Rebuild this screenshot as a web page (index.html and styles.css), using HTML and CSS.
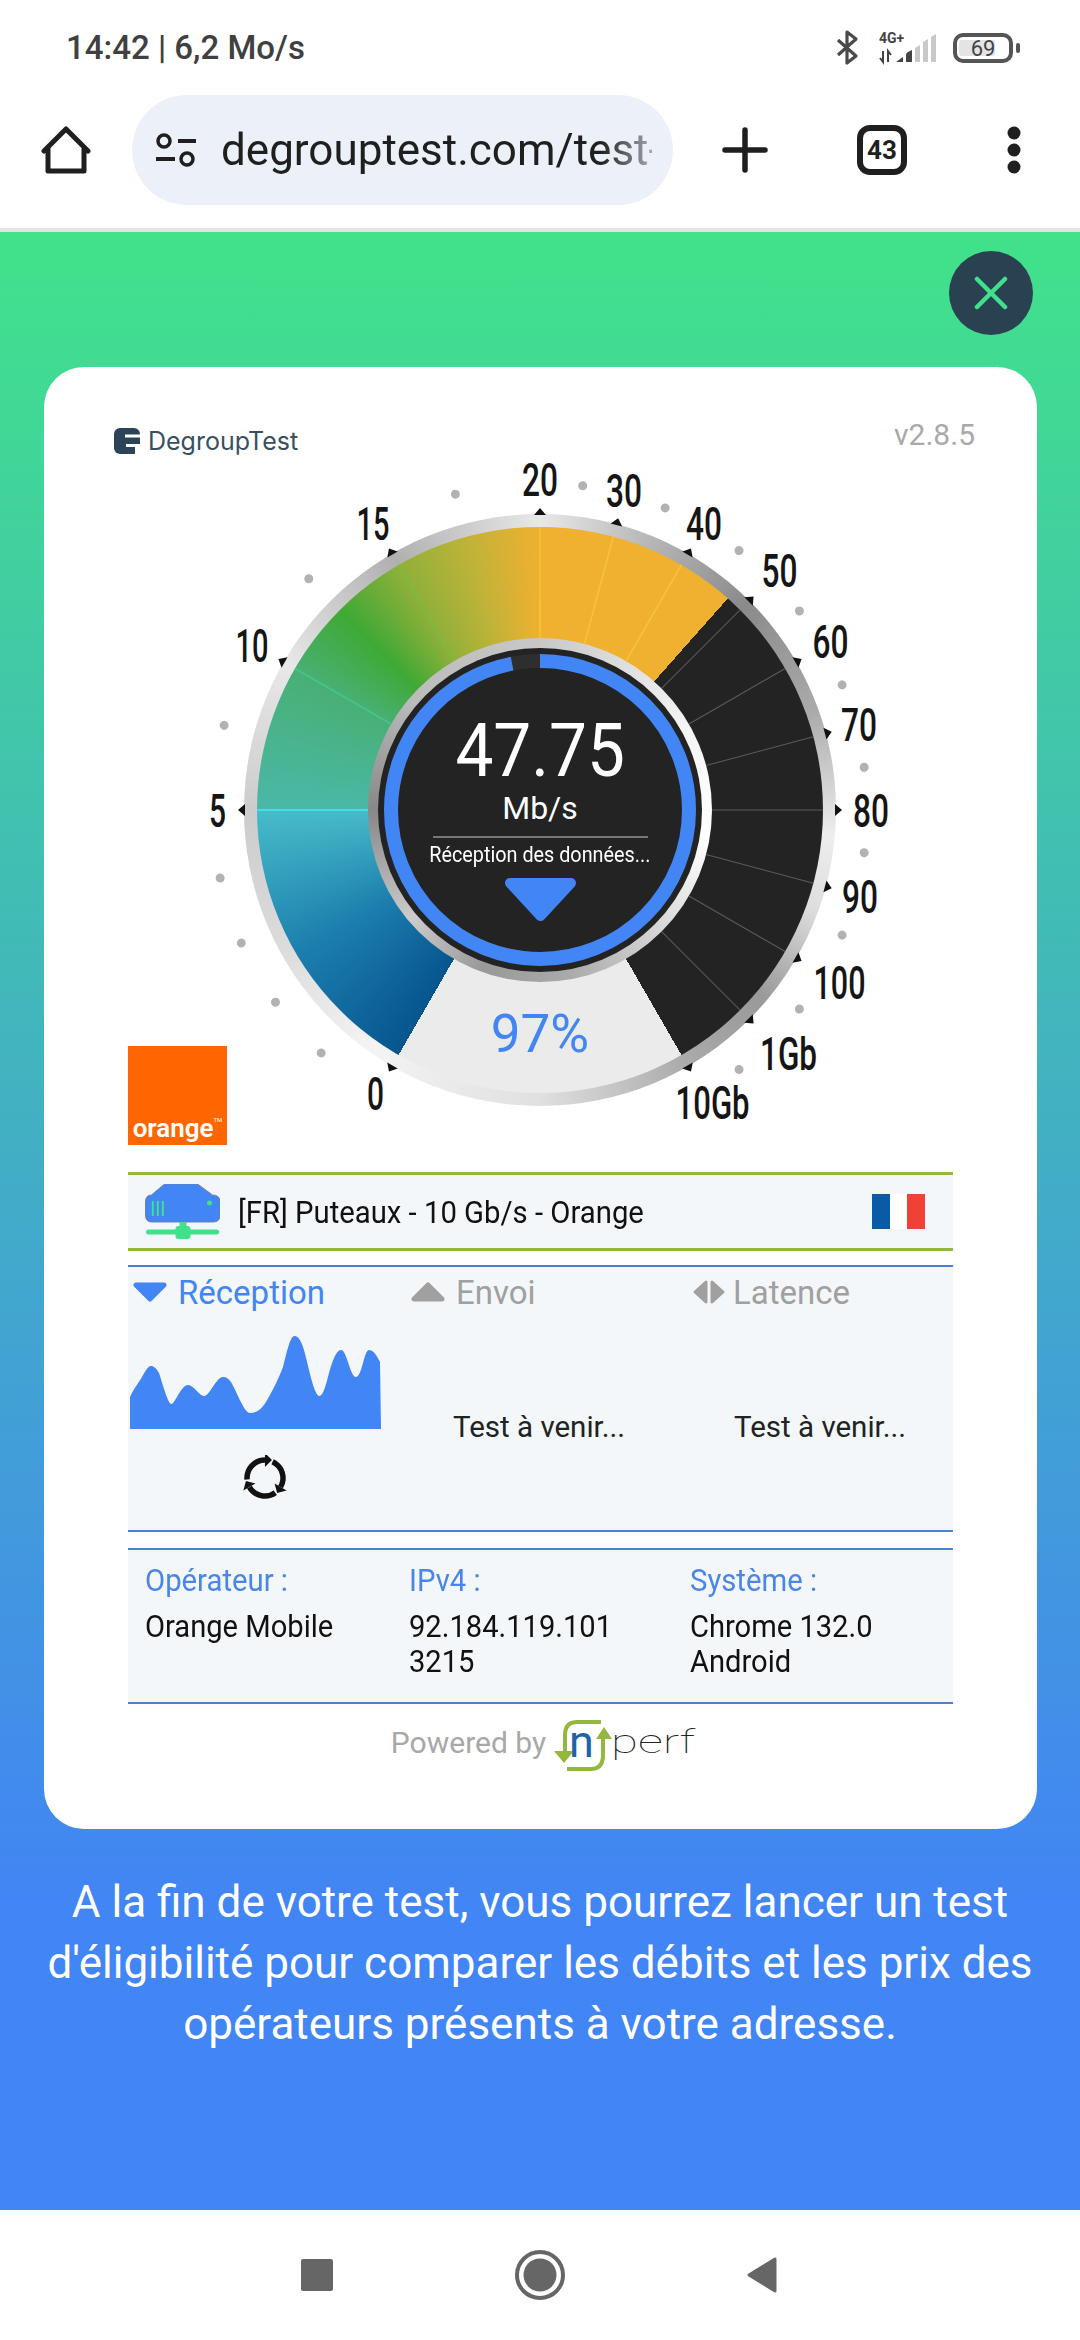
FILE: index.html
```html
<!DOCTYPE html>
<html lang="fr">
<head>
    <meta charset="UTF-8">
    <meta name="viewport" content="width=device-width, initial-scale=1.0">
    <title>DegroupTest</title>
    <link rel="stylesheet" href="styles.css">
</head>
<body>
    <!-- Phone status bar -->
    <div class="status-bar">
        <span class="status-text">14:42 | 6,2 Mo/s</span>
        <svg class="status-icons" width="194" height="50" viewBox="830 20 194 50">
            <path d="M838 38 L856 54 L847 61 V30 L856 37 L838 53" fill="none" stroke="#4a4a4a" stroke-width="3.2" stroke-linejoin="round"/>
            <text x="879" y="41" class="net-type">4G+</text>
            <path d="M883 49 V60 L880 56 M888 60 V49 L891 53" fill="none" stroke="#444" stroke-width="2"/>
            <path d="M896 60 L903 55 V60 Z M906 60 V53 Q906 51 908 50 L912 48 V60 Z" fill="#444"/>
            <path d="M915 60 V46 L920 43 V60 Z M923 60 V40 L928 37 V60 Z M931 60 V35 L936 32 V60 Z" fill="#c8c8c8"/>
            <rect x="955" y="33" width="56" height="26" rx="8" fill="none" stroke="#555" stroke-width="4"/>
            <rect x="959" y="38" width="36" height="16" rx="2" fill="#e4e4e4"/>
            <text x="983" y="54" class="battery-level">69</text>
            <rect x="1016" y="41" width="4" height="10" rx="2" fill="#555"/>
        </svg>
    </div>

    <!-- Chrome toolbar -->
    <div class="toolbar">
        <svg width="51" height="50" viewBox="41 125 51 50">
            <path d="M44 151 L66 129 L88 151 M48 148 V171 H84 V148" fill="none" stroke="#1f1f1f" stroke-width="5" stroke-linecap="round" stroke-linejoin="round"/>
        </svg>
        <div class="omnibox">
            <svg width="42" height="36" viewBox="155 132 42 36">
                <circle cx="164" cy="141" r="6" fill="none" stroke="#1f1f1f" stroke-width="3.5"/>
                <path d="M178 141 H196 M156 159 H175" stroke="#1f1f1f" stroke-width="4"/>
                <circle cx="187" cy="159" r="6" fill="none" stroke="#1f1f1f" stroke-width="3.5"/>
            </svg>
            <span class="url">degrouptest.com/test-</span>
        </div>
        <svg class="plus-icon" width="46" height="46" viewBox="722 127 46 46">
            <path d="M725 150 H765 M745 130 V170" stroke="#1f1f1f" stroke-width="5.5" stroke-linecap="round"/>
        </svg>
        <div class="tab-count">43</div>
        <svg class="menu-icon" width="14" height="48" viewBox="1007 126 14 48">
            <circle cx="1014" cy="133" r="6.5" fill="#1f1f1f"/>
            <circle cx="1014" cy="150" r="6.5" fill="#1f1f1f"/>
            <circle cx="1014" cy="167" r="6.5" fill="#1f1f1f"/>
        </svg>
    </div>

    <div class="content">
        <div class="close-row">
            <div class="close-btn">
                <svg width="34" height="34" viewBox="0 0 34 34">
                    <path d="M3 3 L31 31 M31 3 L3 31" stroke="#41e08c" stroke-width="4.5" stroke-linecap="round"/>
                </svg>
            </div>
        </div>

        <div class="card">
            <div class="card-head">
                <div class="brand">
                    <svg width="26" height="26" viewBox="0 0 26 26">
                        <rect width="26" height="26" rx="6" fill="#2b4459"/>
                        <path d="M11 6.500 H26 V9.500 H11 Z M12 16 H26 V19 H12 Z M21 19 H26 V26 H21 Z" fill="#fff"/>
                    </svg>
                    <span>DegroupTest</span>
                </div>
                <span class="version">v2.8.5</span>
            </div>

            <div class="gauge-wrap">
                <div class="gauge-ring">
                    <div class="gauge-fill">
                        <div class="hub-ring">
                            <div class="hub">
                                <svg class="hub-progress" width="324" height="324" viewBox="-162 -162 324 324">
                                    <circle r="149" fill="none" stroke="#2e2e2e" stroke-width="14"/>
                                    <circle r="149" fill="none" stroke="#4285f4" stroke-width="14" pathLength="100" stroke-dasharray="97 3" transform="rotate(-90)"/>
                                </svg>
                                <span class="speed-value"><span class="speed-text">47.75</span></span>
                                <span class="speed-unit">Mb/s</span>
                                <span class="hub-divider"></span>
                                <span class="hub-status"><span class="hub-status-text">Réception des données...</span></span>
                                <svg class="hub-arrow" width="75" height="45" viewBox="0 0 75 45">
                                    <path d="M7 6 H68 L37.500 39 Z" fill="#4285f4" stroke="#4285f4" stroke-width="10" stroke-linejoin="round"/>
                                </svg>
                            </div>
                        </div>
                    </div>
                </div>

                <!-- dial marks, drawn around the gauge centre -->
                <svg class="gauge-marks" width="825" height="715" viewBox="-412 -353 825 715">
                    <defs>
                        <polygon id="tick" points="-6,-295 0,-302 6,-295" fill="#111"/>
                        <circle id="dot" cx="0" cy="-327" r="4.500" fill="#b2b2b2"/>
                        <line id="sep" x1="0" y1="-172" x2="0" y2="-283"/>
                    </defs>
                    <g stroke="#4adce6" stroke-width="2"><use href="#sep" transform="rotate(-90)"/></g>
                    <g stroke="#45c48c" stroke-width="2"><use href="#sep" transform="rotate(-60)"/></g>
                    <g stroke="#7dbb40" stroke-width="2"><use href="#sep" transform="rotate(-30)"/></g>
                    <g stroke="#f5c53c" stroke-width="1.5">
                        <use href="#sep"/>
                        <use href="#sep" transform="rotate(15)"/>
                        <use href="#sep" transform="rotate(30)"/>
                    </g>
                    <g stroke="#5c5c5c" stroke-width="1">
                        <use href="#sep" transform="rotate(45)"/>
                        <use href="#sep" transform="rotate(60)"/>
                        <use href="#sep" transform="rotate(75)"/>
                        <use href="#sep" transform="rotate(90)"/>
                        <use href="#sep" transform="rotate(105)"/>
                        <use href="#sep" transform="rotate(120)"/>
                        <use href="#sep" transform="rotate(135)"/>
                    </g>

                    <use href="#tick" transform="rotate(-150)"/>
                    <use href="#tick" transform="rotate(-90)"/>
                    <use href="#tick" transform="rotate(-60)"/>
                    <use href="#tick" transform="rotate(-30)"/>
                    <use href="#tick"/>
                    <use href="#tick" transform="rotate(15)"/>
                    <use href="#tick" transform="rotate(30)"/>
                    <use href="#tick" transform="rotate(45)"/>
                    <use href="#tick" transform="rotate(60)"/>
                    <use href="#tick" transform="rotate(75)"/>
                    <use href="#tick" transform="rotate(90)"/>
                    <use href="#tick" transform="rotate(105)"/>
                    <use href="#tick" transform="rotate(120)"/>
                    <use href="#tick" transform="rotate(135)"/>
                    <use href="#tick" transform="rotate(150)"/>

                    <use href="#dot" transform="rotate(-138)"/>
                    <use href="#dot" transform="rotate(-126)"/>
                    <use href="#dot" transform="rotate(-114)"/>
                    <use href="#dot" transform="rotate(-102)"/>
                    <use href="#dot" transform="rotate(-75)"/>
                    <use href="#dot" transform="rotate(-45)"/>
                    <use href="#dot" transform="rotate(-15)"/>
                    <use href="#dot" transform="rotate(7.500)"/>
                    <use href="#dot" transform="rotate(22.500)"/>
                    <use href="#dot" transform="rotate(37.500)"/>
                    <use href="#dot" transform="rotate(52.500)"/>
                    <use href="#dot" transform="rotate(67.500)"/>
                    <use href="#dot" transform="rotate(82.500)"/>
                    <use href="#dot" transform="rotate(97.500)"/>
                    <use href="#dot" transform="rotate(112.500)"/>
                    <use href="#dot" transform="rotate(127.500)"/>
                    <use href="#dot" transform="rotate(142.500)"/>

                    <g class="dial-labels">
                        <text x="-164.400" y="300" textLength="17" lengthAdjust="spacingAndGlyphs">0</text>
                        <text x="-322.400" y="17" textLength="17" lengthAdjust="spacingAndGlyphs">5</text>
                        <text x="-288" y="-148.500" textLength="33" lengthAdjust="spacingAndGlyphs">10</text>
                        <text x="-167" y="-270.400" textLength="33" lengthAdjust="spacingAndGlyphs">15</text>
                        <text x="0" y="-314" textLength="36" lengthAdjust="spacingAndGlyphs">20</text>
                        <text x="84" y="-303" textLength="36" lengthAdjust="spacingAndGlyphs">30</text>
                        <text x="164" y="-270.400" textLength="36" lengthAdjust="spacingAndGlyphs">40</text>
                        <text x="239.500" y="-223.500" textLength="36" lengthAdjust="spacingAndGlyphs">50</text>
                        <text x="290.500" y="-152" textLength="36" lengthAdjust="spacingAndGlyphs">60</text>
                        <text x="319" y="-69" textLength="36" lengthAdjust="spacingAndGlyphs">70</text>
                        <text x="331" y="17" textLength="36" lengthAdjust="spacingAndGlyphs">80</text>
                        <text x="320" y="103" textLength="36" lengthAdjust="spacingAndGlyphs">90</text>
                        <text x="299.500" y="188.500" textLength="52" lengthAdjust="spacingAndGlyphs">100</text>
                        <text x="248.500" y="259.500" textLength="57" lengthAdjust="spacingAndGlyphs">1Gb</text>
                        <text x="172.600" y="309" textLength="74" lengthAdjust="spacingAndGlyphs">10Gb</text>
                    </g>
                    <text class="fill-percent" x="0" y="242">97%</text>
                </svg>

                <div class="isp-logo"><span>orange</span><sup>TM</sup></div>
            </div>

            <div class="server-bar">
                <svg width="75" height="56" viewBox="145.500 1179 75 56">
                    <path d="M146 1197 Q146 1190 152 1190 L165 1179 H198 L213 1190 Q220.500 1190 220.500 1197 V1210 Q220.500 1217 214 1217 H152 Q146 1217 146 1210 Z" fill="#4285f4" stroke="#6a83a8"/>
                    <path d="M153.300 1196 V1211 M158.300 1196 V1211 M163.300 1196 V1211" stroke="#41e08a" stroke-width="2"/>
                    <circle cx="210" cy="1198" r="2.500" fill="#41e08a"/>
                    <path d="M149 1227 H217" stroke="#41e08a" stroke-width="5" stroke-linecap="round"/>
                    <rect x="180" y="1217" width="7" height="6" fill="#41e08a"/>
                    <rect x="176" y="1221" width="15" height="13" rx="3" fill="#41e08a"/>
                </svg>
                <span class="server-name"><span class="server-text">[FR] Puteaux - 10 Gb/s - Orange</span></span>
                <div class="flag">
                    <span class="flag-blue"></span>
                    <span class="flag-white"></span>
                    <span class="flag-red"></span>
                </div>
            </div>

            <div class="test-panel">
                <div class="test-col">
                    <div class="test-head active">
                        <svg width="34" height="20" viewBox="0 0 34 20"><path d="M3 3 H31 L17 17 Z" fill="#4285f4" stroke="#4285f4" stroke-width="5" stroke-linejoin="round"/></svg>
                        <span>Réception</span>
                    </div>
                    <svg class="chart" width="251" height="93" viewBox="130 1336 251 93">
                        <path d="M130 1429 V1397 C134 1388 138 1384 142 1377 C146 1370 148 1366 151 1366 C154 1366 156 1368 159 1373 C163 1385 168 1404 171.500 1404 C175 1404 181 1385 188 1385 C194 1385 199 1396 204 1396 C210 1396 216 1377 223 1377 C226 1377 228 1378 231 1382 C237 1392 244 1413 250 1413 C256 1413 261 1410 266 1402 C273 1390 278 1380 283 1367 C287 1352 290 1336 294.500 1336 C298 1336 301 1340 304 1350 C309 1368 314 1396 319.500 1396 C323 1396 326 1385 329 1373 C332 1362 336 1350 341 1350 C347 1350 350 1377 356 1377 C362 1377 364 1350 369 1350 C373 1350 376 1354 380 1362 L381 1429 Z" fill="#4285f4"/>
                    </svg>
                    <svg class="spinner" width="46" height="46" viewBox="242 1455 46 46">
                        <defs>
                            <g id="spin-arm">
                                <path d="M272.600 1461.700 A18 18 0 0 1 280.600 1487" fill="none" stroke="#111" stroke-width="5.500"/>
                                <polygon points="286.600,1490.500 274.600,1483.500 277.100,1493" fill="#111"/>
                            </g>
                        </defs>
                        <use href="#spin-arm"/>
                        <use href="#spin-arm" transform="rotate(120 265 1478)"/>
                        <use href="#spin-arm" transform="rotate(240 265 1478)"/>
                    </svg>
                </div>
                <div class="test-col">
                    <div class="test-head">
                        <svg width="34" height="20" viewBox="0 0 34 20"><path d="M3 17 H31 L17 3 Z" fill="#a0a0a0" stroke="#a0a0a0" stroke-width="5" stroke-linejoin="round"/></svg>
                        <span>Envoi</span>
                    </div>
                    <p class="test-later">Test à venir...</p>
                </div>
                <div class="test-col">
                    <div class="test-head tight">
                        <svg width="34" height="26" viewBox="0 0 34 26"><path d="M14 3 L3 13 L14 23 Z M20 3 L31 13 L20 23 Z" fill="#a0a0a0" stroke="#a0a0a0" stroke-width="3" stroke-linejoin="round"/></svg>
                        <span>Latence</span>
                    </div>
                    <p class="test-later">Test à venir...</p>
                </div>
            </div>

            <div class="info-panel">
                <div class="info-col">
                    <span class="info-label">Opérateur :</span>
                    <span class="info-value first">Orange Mobile</span>
                </div>
                <div class="info-col">
                    <span class="info-label">IPv4 :</span>
                    <span class="info-value first">92.184.119.101</span>
                    <span class="info-value">3215</span>
                </div>
                <div class="info-col">
                    <span class="info-label">Système :</span>
                    <span class="info-value first">Chrome 132.0</span>
                    <span class="info-value">Android</span>
                </div>
            </div>

            <div class="powered">
                <span class="powered-text">Powered by</span>
                <svg width="146" height="54" viewBox="551 1718 146 54">
                    <path d="M600 1722 H576 Q564 1722 564 1735 V1753" fill="none" stroke="#94b83d" stroke-width="4"/>
                    <polygon points="553,1751 573,1751 563,1763" fill="#94b83d"/>
                    <path d="M566 1769 H590 Q602 1769 602 1755 V1738" fill="none" stroke="#94b83d" stroke-width="4"/>
                    <polygon points="595,1739 611,1739 603,1727" fill="#94b83d"/>
                    <text class="nperf-n" x="568" y="1757">n</text>
                    <text class="nperf-word" x="610" y="1753" textLength="84" lengthAdjust="spacingAndGlyphs">perf</text>
                </svg>
            </div>
        </div>

        <p class="notice">A la fin de votre test, vous pourrez lancer un test d'éligibilité pour comparer les débits et les prix des opérateurs présents à votre adresse.</p>
    </div>

    <!-- Android navigation -->
    <div class="nav-bar">
        <svg width="32" height="32" viewBox="0 0 32 32"><rect width="32" height="32" rx="2" fill="#666"/></svg>
        <svg width="50" height="50" viewBox="0 0 50 50">
            <circle cx="25" cy="25" r="23" fill="none" stroke="#666" stroke-width="4"/>
            <circle cx="25" cy="25" r="16.500" fill="#666"/>
        </svg>
        <svg width="30" height="36" viewBox="0 0 30 36"><path d="M28 2 V34 L2 18 Z" fill="#666" stroke="#666" stroke-width="3" stroke-linejoin="round"/></svg>
    </div>
</body>
</html>
```

FILE: styles.css
```css
* {
    box-sizing: border-box;
}
body {
    margin: 0;
    width: 1080px;
    height: 2340px;
    display: flex;
    flex-direction: column;
    font-family: Roboto, "Liberation Sans", sans-serif;
    background: #fff;
    overflow: hidden;
}
svg {
    display: block;
    flex-shrink: 0;
}

/* status bar */
.status-bar {
    height: 94px;
    display: flex;
    align-items: center;
    justify-content: space-between;
    padding: 0 56px 0 66px;
}
.status-text {
    font-size: 33px;
    font-weight: 500;
    color: #404040;
}
.net-type {
    font-size: 14px;
    font-weight: 700;
    fill: #444;
}
.battery-level {
    font-size: 22px;
    fill: #444;
    text-anchor: middle;
}

/* toolbar */
.toolbar {
    height: 138px;
    display: flex;
    align-items: center;
    padding: 0 0 22px 41px;
    border-bottom: 4px solid #e2e2e2;
}
.omnibox {
    width: 541px;
    height: 110px;
    margin-left: 40px;
    padding-left: 23px;
    display: flex;
    align-items: center;
    background: #ebf0f9;
    border-radius: 55px;
}
.url {
    width: 431px;
    margin-left: 24px;
    overflow: hidden;
    white-space: nowrap;
    font-size: 44px;
    color: #1f1f1f;
    -webkit-mask-image: linear-gradient(to right, #000 88%, rgba(0, 0, 0, .35) 100%);
    mask-image: linear-gradient(to right, #000 88%, rgba(0, 0, 0, .35) 100%);
}
.plus-icon {
    margin-left: 49px;
}
.tab-count {
    width: 50px;
    height: 50px;
    margin-left: 89px;
    display: flex;
    align-items: center;
    justify-content: center;
    border: 6px solid #1f1f1f;
    border-radius: 13px;
    font-size: 26px;
    font-weight: 700;
    color: #1f1f1f;
}
.menu-icon {
    margin-left: 100px;
}

/* page under the toolbar */
.content {
    flex: 1;
    background: linear-gradient(#41e28a 0, #4285f4 1660px);
}
.close-row {
    display: flex;
    justify-content: flex-end;
    padding: 19px 47px 0 0;
}
.close-btn {
    width: 84px;
    height: 84px;
    display: flex;
    align-items: center;
    justify-content: center;
    background: #2a4152;
    border-radius: 50%;
}
.card {
    width: 993px;
    height: 1462px;
    margin: 32px 0 0 44px;
    padding: 50px 84px 0;
    background: #fff;
    border-radius: 40px;
}
.card-head {
    height: 40px;
    margin: 0 -22px 0 -14px;
    display: flex;
    align-items: center;
    justify-content: space-between;
}
.brand {
    margin-top: 8px;
    display: flex;
    align-items: center;
    gap: 8px;
    font-family: Inter, Roboto, sans-serif;
    font-size: 25px;
    color: #3a5060;
}
.version {
    margin-bottom: 6px;
    font-size: 30px;
    color: #a9a9a9;
}

/* gauge */
.gauge-wrap {
    position: relative;
    height: 715px;
    padding-top: 57px;
    display: flex;
    justify-content: center;
    align-items: flex-start;
}
.gauge-ring {
    width: 592px;
    height: 592px;
    margin-left: -1px;
    display: flex;
    align-items: center;
    justify-content: center;
    border-radius: 50%;
    background: conic-gradient(#e8e8e8 0deg, #bbb 20deg, #8a8a8a 45deg, #aaa 70deg, #eee 95deg, #ddd 110deg, #999 130deg, #aaa 150deg, #e0e0e0 180deg, #f4f4f4 215deg, #ddd 240deg, #ccc 270deg, #e8e8e8 300deg, #b0b0b0 330deg, #e8e8e8 360deg);
}
.gauge-fill {
    width: 566px;
    height: 566px;
    display: flex;
    align-items: center;
    justify-content: center;
    border-radius: 50%;
    background: conic-gradient(from -150deg, #06558f 0deg, #1d7fae 30deg, #46bcc9 60deg, #4ab8a8 60deg, #48b074 90deg, #3fa935 105deg, #8fb03a 120deg, #c0b338 135deg, #f0b030 150deg, #f0b030 191.6deg, #232323 191.6deg, #232323 300deg, #ebebeb 300deg, #ebebeb 360deg);
}
.hub-ring {
    width: 344px;
    height: 344px;
    display: flex;
    align-items: center;
    justify-content: center;
    border-radius: 50%;
    background: conic-gradient(#c8c8c8 0deg, #f4f4f4 60deg, #fff 100deg, #ddd 130deg, #aaa 170deg, #999 200deg, #ccc 230deg, #888 270deg, #bbb 310deg, #c8c8c8 360deg);
}
.hub {
    position: relative;
    width: 324px;
    height: 324px;
    padding-top: 65px;
    display: flex;
    flex-direction: column;
    align-items: center;
    border-radius: 50%;
    background: #232323;
    color: #fff;
}
.hub-progress {
    position: absolute;
    top: 0;
    left: 0;
}
.speed-value {
    height: 75px;
    line-height: 75px;
    font-size: 75px;
}
.speed-text {
    display: inline-block;
    transform: scaleX(.9);
}
.speed-unit {
    height: 36px;
    margin-top: 2px;
    line-height: 36px;
    font-size: 32px;
}
.hub-divider {
    width: 215px;
    height: 2px;
    margin-top: 10px;
    background: #777;
}
.hub-status {
    height: 26px;
    margin-top: 4px;
    line-height: 26px;
    font-size: 22px;
    white-space: nowrap;
}
.hub-status-text {
    display: inline-block;
    transform: scaleX(.9);
}
.hub-arrow {
    margin-top: 9px;
}
.gauge-marks {
    position: absolute;
    top: 0;
    left: 0;
}
.dial-labels text {
    font-size: 47px;
    font-weight: 500;
    fill: #151515;
    text-anchor: middle;
}
.fill-percent {
    font-size: 53px;
    fill: #4285f4;
    text-anchor: middle;
}
.isp-logo {
    position: absolute;
    left: 0;
    top: 589px;
    width: 99px;
    height: 99px;
    display: flex;
    align-items: flex-end;
    justify-content: center;
    padding-bottom: 2px;
    background: #ff6600;
    color: #fff;
    font-size: 26px;
    font-weight: 600;
}
.isp-logo sup {
    font-size: 6px;
    font-weight: 400;
    align-self: flex-end;
    margin-bottom: 20px;
}

/* server line */
.server-bar {
    height: 79px;
    display: flex;
    align-items: center;
    padding: 0 28px 0 17px;
    background: #f3f7f9;
    border-top: 3px solid #94b83d;
    border-bottom: 3px solid #94b83d;
}
.server-name {
    flex: 1;
    margin-left: 18px;
    font-size: 32px;
    color: #111;
    white-space: nowrap;
}
.server-text {
    display: inline-block;
    transform: scaleX(.915);
    transform-origin: left;
}
.flag {
    width: 53px;
    height: 35px;
    display: flex;
}
.flag span {
    flex: 1;
}
.flag-blue {
    background: #0b5aa6;
}
.flag-white {
    background: #fff;
}
.flag-red {
    background: #ef4135;
}

/* test results */
.test-panel {
    height: 267px;
    margin-top: 14px;
    display: grid;
    grid-template-columns: 278px 281px 1fr;
    padding-left: 2px;
    background: #f3f7f9;
    border-top: 2px solid #4a80d0;
    border-bottom: 2px solid #4a80d0;
}
.test-head {
    height: 43px;
    padding: 7px 0 0 3px;
    display: flex;
    align-items: center;
    gap: 11px;
    font-size: 33px;
    color: #a0a0a0;
}
.test-head.active {
    color: #4285f4;
}
.test-head.tight {
    gap: 7px;
}
.chart {
    margin-top: 26px;
}
.spinner {
    margin: 26px 0 0 112px;
}
.test-later {
    margin: 99px 0 0 45px;
    line-height: 36px;
    font-size: 29.500px;
    color: #222;
}

/* line info */
.info-panel {
    height: 156px;
    margin-top: 16px;
    display: grid;
    grid-template-columns: 264px 281px 1fr;
    padding: 12px 0 0 17px;
    background: #f3f7f9;
    border-top: 2px solid #4a80d0;
    border-bottom: 2px solid #4a80d0;
}
.info-col {
    display: flex;
    flex-direction: column;
    align-items: flex-start;
}
.info-label {
    line-height: 36px;
    font-size: 32px;
    color: #4a86e8;
    transform: scaleX(.915);
    transform-origin: left;
}
.info-value {
    line-height: 35px;
    font-size: 32px;
    color: #111;
    transform: scaleX(.91);
    transform-origin: left;
}
.info-value.first {
    margin-top: 11px;
}

.powered {
    margin-top: 14px;
    display: flex;
    align-items: center;
    justify-content: center;
    gap: 6px;
    padding-left: 8px;
    font-size: 30px;
    color: #a8a8a8;
}
.powered-text {
    margin-bottom: 6px;
}
.nperf-n {
    font-size: 45px;
    fill: #1c64a8;
}
.nperf-word {
    font-size: 34px;
    font-weight: 100;
    fill: #222;
}

.notice {
    width: 1040px;
    margin: 43px auto 0;
    line-height: 61px;
    font-size: 44px;
    color: #fff;
    text-align: center;
}

.nav-bar {
    height: 130px;
    display: flex;
    align-items: center;
    gap: 182px;
    padding-left: 301px;
    background: #fff;
}
```
